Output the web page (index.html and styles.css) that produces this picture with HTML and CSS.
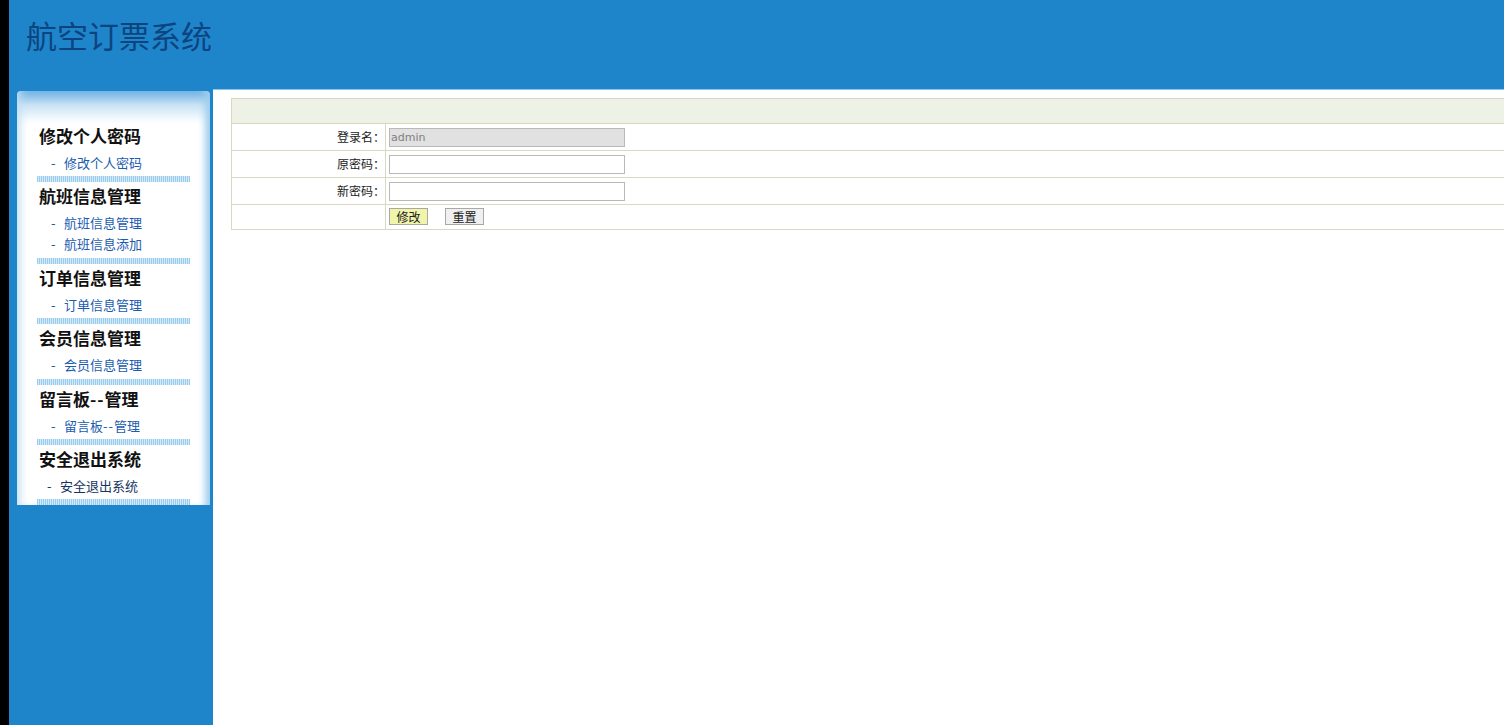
FILE: index.html
```html
<!DOCTYPE html>
<html lang="zh">
<head>
<meta charset="utf-8">
<title>航空订票系统</title>
<link rel="stylesheet" href="styles.css">
</head>
<body>
<div class="strip"></div>
<div class="page">
  <header class="top"><h1>航空订票系统</h1></header>
  <div class="body-row">
    <aside class="side">
      <nav class="panel">
        <section class="group">
          <h2>修改个人密码</h2>
          <ul><li><a href="#">修改个人密码</a></li></ul>
        </section>
        <section class="group two">
          <h2>航班信息管理</h2>
          <ul><li><a href="#">航班信息管理</a></li><li><a href="#">航班信息添加</a></li></ul>
        </section>
        <section class="group">
          <h2>订单信息管理</h2>
          <ul><li><a href="#">订单信息管理</a></li></ul>
        </section>
        <section class="group">
          <h2>会员信息管理</h2>
          <ul><li><a href="#">会员信息管理</a></li></ul>
        </section>
        <section class="group">
          <h2>留言板<span class="dash">--</span>管理</h2>
          <ul><li><a href="#">留言板<span class="dash">--</span>管理</a></li></ul>
        </section>
        <section class="group last">
          <h2>安全退出系统</h2>
          <ul><li><a href="#">安全退出系统</a></li></ul>
        </section>
      </nav>
    </aside>
    <main class="content">
      <table class="form">
        <colgroup><col class="col-label"><col></colgroup>
        <tr class="head"><td colspan="2"></td></tr>
        <tr class="row"><th>登录名：</th><td><input class="field off" type="text" value="admin" disabled></td></tr>
        <tr class="row"><th>原密码：</th><td><input class="field" type="password"></td></tr>
        <tr class="row"><th>新密码：</th><td><input class="field" type="password"></td></tr>
        <tr class="actions"><th></th><td><button class="btn ok" type="button">修改</button><button class="btn" type="button">重置</button></td></tr>
      </table>
    </main>
  </div>
</div>
</body>
</html>
```
FILE: styles.css
```css
* { box-sizing: border-box; }
html, body { margin: 0; height: 100%; overflow: hidden; }
body {
  display: flex;
  background: #fff;
  font-family: "Noto Sans CJK SC", "Liberation Sans", sans-serif;
}
.strip { width: 9px; flex: none; background: #000; }
.page { flex: 1; min-width: 0; display: flex; flex-direction: column; }
.top { height: 89px; flex: none; background: #1f85cb; }
.top h1 {
  margin: 0;
  padding: 12px 0 0 17px;
  font-size: 31px;
  line-height: 45px;
  font-weight: 400;
  color: #0c4480;
}
.body-row { flex: 1; display: flex; min-height: 0; }
.side { width: 204px; flex: none; background: #1f85cb; padding: 2px 3px 0 8px; }
.panel {
  height: 414px;
  overflow: hidden;
  padding: 31px 20px 0 20px;
  background: linear-gradient(#6db1e2 0, #c9e2f5 14px, #f4fafe 28px, #fff 34px);
  border-radius: 4px 4px 0 0;
  box-shadow: inset 9px 0 8px -6px #bfdef4, inset -9px 0 7px -4px #9fcdee;
}
.group {
  height: 60.4px;
  background: repeating-linear-gradient(90deg, #98cdf0 0, #98cdf0 1px, #d3e9f8 1px, #d3e9f8 2px) bottom / 100% 6px no-repeat;
}
.group.two { height: 81.4px; }
.group h2 {
  margin: 0;
  padding-left: 2px;
  font-size: 17px;
  line-height: 27px;
  font-weight: 700;
  color: #111;
}
.group ul { list-style: none; margin: 3px 0 0; padding: 0; }
.group li { height: 21px; line-height: 21px; padding-left: 14px; font-size: 13px; color: #0f5a9e; }
.group li::before { content: "-"; display: inline-block; width: 13px; }
.group a { color: #1a5cb0; text-decoration: none; }
.dash { letter-spacing: 1px; }
.last li { padding-left: 10px; color: #16355f; }
.last a { color: #16355f; }
.content { flex: 1; min-width: 0; padding: 8px 0 0 18px; border-top: 1px solid #8cc4ea; }
.form { width: 1300px; border-collapse: collapse; table-layout: fixed; font-size: 12px; color: #222; }
.col-label { width: 154px; }
.form td, .form th { border: 1px solid #d9d9c3; padding: 0; }
.form th { font-weight: 400; text-align: right; padding-bottom: 1px; }
.form td { padding-left: 3px; }
.head td { height: 25px; background: #edf1e6; }
.row th, .row td { height: 27px; }
.actions th, .actions td { height: 25px; }
.form .actions td { vertical-align: top; padding-top: 3px; }
.field {
  display: block;
  width: 236px;
  height: 19px;
  padding: 1px 1px 0;
  border: 1px solid #b9b9b9;
  background: #fff;
  font: 11px "DejaVu Sans", sans-serif;
  border-radius: 0;
  outline: 0;
}
.off { background: #e1e1e1; color: #808080; }
.btn {
  display: inline-block;
  vertical-align: top;
  width: 39px;
  height: 17px;
  padding: 0;
  margin-right: 17px;
  border: 1px solid #a8a8a8;
  background: #f0f0f0;
  font: 12px/15px "Noto Sans CJK SC", sans-serif;
  color: #222;
}
.ok { background: #f1f4ab; }
```
